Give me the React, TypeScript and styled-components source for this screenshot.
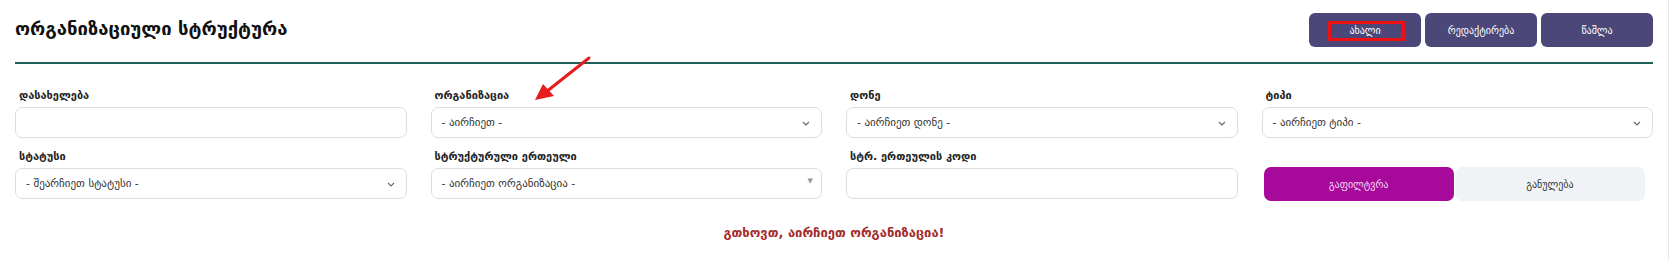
import React from "react";
import styled, { createGlobalStyle } from "styled-components";

const Global = createGlobalStyle`
  html, body { margin: 0; padding: 0; background: #fff; }
  body { font-family: "DejaVu Sans", "Noto Sans", sans-serif; color: #222; }
  * { box-sizing: border-box; }
`;

const Page = styled.div`
  position: relative;
  width: 1672px;
  height: 260px;
  overflow: hidden;
  background: #fff;
`;

const Panel = styled.div`
  width: 1669px;
  height: 260px;
  padding: 13px 15px 0 15px;
  border-right: 1px solid #e6e6e6;
`;

const Header = styled.div`
  display: flex;
  justify-content: space-between;
  align-items: flex-start;
  height: 51px;
  border-bottom: 2px solid #1f5e59;
`;

const Title = styled.h1`
  margin: 5px 0 0 0;
  font-size: 18.5px;
  font-weight: 700;
  color: #111;
  line-height: 22px;
`;

const Actions = styled.div`
  display: flex;
  gap: 4px;
`;

const ActionButton = styled.button`
  position: relative;
  width: 112px;
  height: 34px;
  border: none;
  border-radius: 6px;
  background: #4b4778;
  color: #fff;
  font-family: inherit;
  font-size: 10px;
  cursor: pointer;
`;

const Highlight = styled.span`
  position: absolute;
  left: 19px;
  top: 8px;
  width: 77px;
  height: 20px;
  border: 3px solid #ee1111;
`;

const Grid = styled.div`
  display: grid;
  grid-template-columns: repeat(4, 1fr);
  column-gap: 24px;
  row-gap: 11px;
  margin-top: 24px;
`;

const Field = styled.div`
  display: flex;
  flex-direction: column;
`;

const Label = styled.label`
  height: 19px;
  line-height: 16px;
  font-size: 11px;
  font-weight: 700;
  color: #222;
  padding-left: 4px;
`;

const Box = styled.div`
  position: relative;
  height: 31px;
  border: 1px solid #dedede;
  border-radius: 7px;
  background: #fff;
  display: flex;
  align-items: center;
  padding-left: 10px;
  font-size: 11px;
  color: #333;
`;

const Chevron = styled.svg`
  position: absolute;
  right: 11px;
  top: 13px;
`;

const Caret = styled.span`
  position: absolute;
  right: 8px;
  top: 8px;
  font-size: 7px;
  color: #999;
`;

const ButtonPair = styled.div`
  display: flex;
  gap: 1px;
  padding: 18px 8px 0 2px;
`;

const PairButton = styled.button<{ $primary?: boolean }>`
  flex: 1;
  height: 34px;
  border: none;
  border-radius: 7px;
  background: ${(p) => (p.$primary ? "#a7099a" : "#eff3f5")};
  color: ${(p) => (p.$primary ? "#f6d9f2" : "#333")};
  font-family: inherit;
  font-size: 10px;
`;

const ErrorText = styled.div`
  margin-top: 24px;
  text-align: center;
  font-size: 13px;
  font-weight: 700;
  color: #a52b2b;
`;

const ArrowOverlay = styled.svg`
  position: absolute;
  left: 530px;
  top: 54px;
`;

const Down = () => (
  <Chevron width="8" height="5" viewBox="0 0 8 5">
    <path d="M1 1 L4 4 L7 1" fill="none" stroke="#666" strokeWidth="1.1" />
  </Chevron>
);

const Select = ({ text }: { text: string }) => (
  <Box>
    {text}
    <Down />
  </Box>
);

export default function App() {
  return (
    <Page>
      <Global />
      <Panel>
        <Header>
          <Title>ორგანიზაციული სტრუქტურა</Title>
          <Actions>
            <ActionButton>
              ახალი
              <Highlight />
            </ActionButton>
            <ActionButton>რედაქტირება</ActionButton>
            <ActionButton>წაშლა</ActionButton>
          </Actions>
        </Header>
        <Grid>
          <Field>
            <Label>დასახელება</Label>
            <Box />
          </Field>
          <Field>
            <Label>ორგანიზაცია</Label>
            <Select text="- აირჩიეთ -" />
          </Field>
          <Field>
            <Label>დონე</Label>
            <Select text="- აირჩიეთ დონე -" />
          </Field>
          <Field>
            <Label>ტიპი</Label>
            <Select text="- აირჩიეთ ტიპი -" />
          </Field>
          <Field>
            <Label>სტატუსი</Label>
            <Select text="- შეარჩიეთ სტატუსი -" />
          </Field>
          <Field>
            <Label>სტრუქტურული ერთეული</Label>
            <Box>
              - აირჩიეთ ორგანიზაცია -
              <Caret>▼</Caret>
            </Box>
          </Field>
          <Field>
            <Label>სტრ. ერთეულის კოდი</Label>
            <Box />
          </Field>
          <ButtonPair>
            <PairButton $primary>გაფილტვრა</PairButton>
            <PairButton>განულება</PairButton>
          </ButtonPair>
        </Grid>
        <ErrorText>გთხოვთ, აირჩიეთ ორგანიზაცია!</ErrorText>
      </Panel>
      <ArrowOverlay width="64" height="52" viewBox="0 0 64 52">
        <line x1="59" y1="4" x2="16" y2="38" stroke="#e81c1c" strokeWidth="3" strokeLinecap="round" />
        <polygon points="5,46 13,30 24,42" fill="#e81c1c" />
      </ArrowOverlay>
    </Page>
  );
}
